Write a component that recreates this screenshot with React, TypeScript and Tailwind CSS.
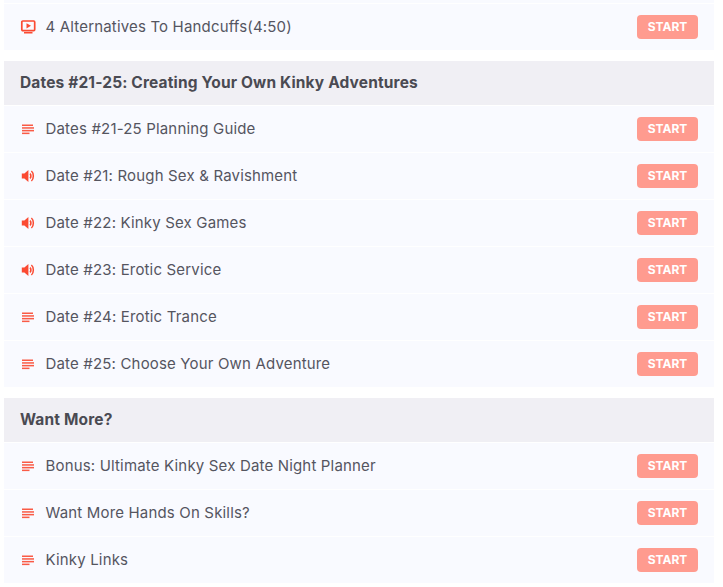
const accent = "#fb4a32";

const VideoIcon = () => (
  <svg width="16" height="14" viewBox="0 0 16 14" fill="none">
    <rect x="1.8" y="1" width="12.9" height="9.6" rx="1" stroke={accent} strokeWidth="1.7" />
    <path d="M6.5 3.2 L11 5.8 L6.5 8.4 Z" fill={accent} />
    <rect x="4" y="12" width="8.5" height="1.5" fill={accent} />
  </svg>
);

const ListIcon = () => (
  <svg width="16" height="14" viewBox="0 0 16 14" fill={accent} opacity="0.9">
    <rect x="2" y="2.5" width="11" height="1.5" />
    <rect x="2" y="5.2" width="12" height="1.5" />
    <rect x="2" y="7.9" width="12" height="1.5" />
    <rect x="2" y="10.6" width="7.5" height="1.5" />
  </svg>
);

const SoundIcon = () => (
  <svg width="16" height="14" viewBox="0 0 16 14" fill="none">
    <path d="M1.8 4.6 H4.4 L8.4 1 V13 L4.4 9.4 H1.8 Z" fill={accent} />
    <path d="M10 4.6 C11.2 5.7 11.2 8.3 10 9.4" stroke={accent} strokeWidth="1.6" />
    <path d="M11.4 2 C14 4.3 14 9.7 11.4 12" stroke={accent} strokeWidth="1.5" />
  </svg>
);

const icons = { video: VideoIcon, list: ListIcon, sound: SoundIcon };

type Lesson = { icon: keyof typeof icons; title: string };

const Row = ({ icon, title, first }: Lesson & { first?: boolean }) => {
  const Icon = icons[icon];
  return (
    <div
      className={
        first
          ? "flex items-center h-[46px] bg-[#f9faff] pl-4 pr-4"
          : "flex items-center h-[47px] bg-[#f9faff] border-t border-white pl-4 pr-4"
      }
    >
      <Icon />
      <span className="ml-[9.5px] flex-1 text-[15px] tracking-[0.17px] text-[#55555f]">{title}</span>
      <span className="flex items-center justify-center w-[61px] h-6 rounded bg-[#ff9b8f] text-white text-xs font-bold">
        START
      </span>
    </div>
  );
};

const Header = ({ title }: { title: string }) => (
  <div className="flex items-center h-11 bg-[#f0eff4] pl-4 text-[15.5px] tracking-[0.15px] font-bold text-[#4a4a52]">
    {title}
  </div>
);

const dates: Lesson[] = [
  { icon: "list", title: "Dates #21-25 Planning Guide" },
  { icon: "sound", title: "Date #21: Rough Sex & Ravishment" },
  { icon: "sound", title: "Date #22: Kinky Sex Games" },
  { icon: "sound", title: "Date #23: Erotic Service" },
  { icon: "list", title: "Date #24: Erotic Trance" },
  { icon: "list", title: "Date #25: Choose Your Own Adventure" },
];

const more: Lesson[] = [
  { icon: "list", title: "Bonus: Ultimate Kinky Sex Date Night Planner" },
  { icon: "list", title: "Want More Hands On Skills?" },
  { icon: "list", title: "Kinky Links" },
];

export default function App() {
  return (
    <div className="w-[723px] h-[587px] overflow-hidden bg-white pl-1 pr-[9px] font-['Inter',sans-serif]">
      <div className="h-1 bg-[#f9faff] border-b border-white" />
      <Row icon="video" title="4 Alternatives To Handcuffs(4:50)" first />
      <div className="mt-[11px]">
        <Header title="Dates #21-25: Creating Your Own Kinky Adventures" />
        {dates.map((l) => (
          <Row key={l.title} {...l} />
        ))}
      </div>
      <div className="mt-[11px]">
        <Header title="Want More?" />
        {more.map((l) => (
          <Row key={l.title} {...l} />
        ))}
      </div>
    </div>
  );
}
